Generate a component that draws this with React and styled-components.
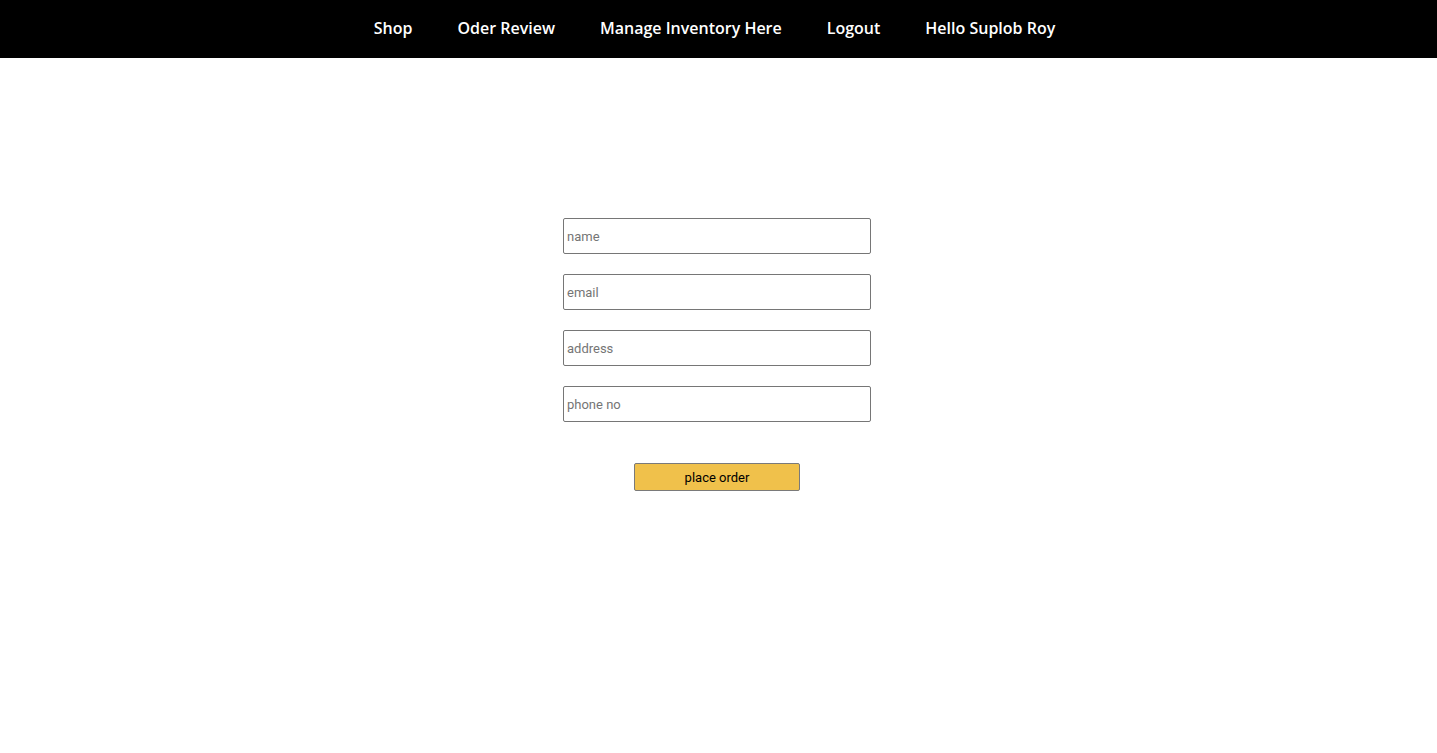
import React from "react";
import styled, { createGlobalStyle } from "styled-components";

const GlobalStyle = createGlobalStyle`
    body {
        margin: 0;
        background: #fff;
        font-family: "Open Sans", "Liberation Sans", sans-serif;
    }
`;

const Nav = styled.nav`
    height: 58px;
    box-sizing: border-box;
    padding-bottom: 2px;
    padding-right: 8px;
    background: #000;
    display: flex;
    justify-content: center;
    align-items: center;
    gap: 45px;
`;

const NavLink = styled.a`
    color: #fff;
    text-decoration: none;
    font-size: 16px;
    font-weight: 600;
    cursor: pointer;
`;

const Form = styled.form`
    display: flex;
    flex-direction: column;
    align-items: center;
    gap: 20px;
    padding-top: 160px;
    padding-right: 3px;
`;

const Input = styled.input`
    box-sizing: border-box;
    width: 308px;
    height: 36px;
    border: 1px solid #767676;
    border-radius: 2px;
    padding: 0 3px;
    font-family: Roboto, "Liberation Sans", sans-serif;
    font-size: 13px;
    color: #222;

    &::placeholder {
        color: #757575;
    }
`;

const Submit = styled.button`
    box-sizing: border-box;
    width: 166px;
    height: 28px;
    margin-top: 21px;
    background: #f0c14b;
    border: 1px solid #7a7a7a;
    border-radius: 2px;
    font-family: Roboto, "Liberation Sans", sans-serif;
    font-size: 13px;
    color: #000;
    cursor: pointer;
`;

function App() {
    return (
        <>
            <GlobalStyle />
            <Nav>
                <NavLink>Shop</NavLink>
                <NavLink>Oder Review</NavLink>
                <NavLink>Manage Inventory Here</NavLink>
                <NavLink>Logout</NavLink>
                <NavLink>Hello Suplob Roy</NavLink>
            </Nav>
            <Form onSubmit={(e) => e.preventDefault()}>
                <Input type="text" placeholder="name" />
                <Input type="email" placeholder="email" />
                <Input type="text" placeholder="address" />
                <Input type="text" placeholder="phone no" />
                <Submit type="submit">place order</Submit>
            </Form>
        </>
    );
}

export default App;
